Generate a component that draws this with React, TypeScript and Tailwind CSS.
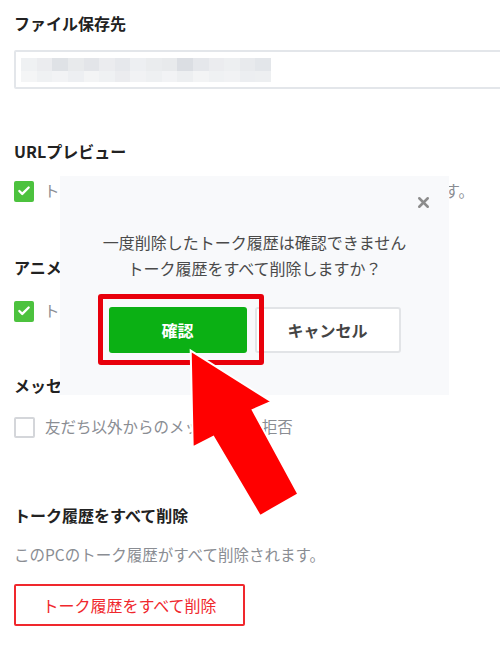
import { Check, X } from "lucide-react";

const mosaicTop = ["#eef0f2", "#e9ebee", "#dcdfe4", "#e6e8eb", "#e1e3e7", "#e9ebee", "#e4e6ea", "#eceef1", "#e8eaed", "#e6e8eb", "#d8dbe0", "#e3e5e9", "#e9ebee", "#eceef0", "#e6e8ec", "#e1e4e8"];
const mosaicBottom = ["#f3f4f6", "#eef0f2", "#f1f2f4", "#eceef1", "#f2f3f5", "#eef0f2", "#e9ebee", "#f0f1f3", "#edeff1", "#f1f2f4", "#eceef0", "#f2f3f5", "#eef0f2", "#f0f1f3", "#ebedf0", "#eceef0"];

const CheckRow = ({ checked, text, className }: { checked: boolean; text: string; className: string }) => (
  <div className={`flex items-center h-[24px] gap-[10px] ${className}`}>
    {checked ? (
      <span className="w-[20px] h-[21px] rounded-[2px] bg-[#4cc23e] flex items-center justify-center shrink-0">
        <Check className="w-[14px] h-[14px] text-white" strokeWidth={4} />
      </span>
    ) : (
      <span className="w-[21px] h-[21px] rounded-[2px] border-2 border-[#d4d6da] bg-white shrink-0" />
    )}
    <span className="text-[15.5px] text-[#8a8d93] whitespace-nowrap">{text}</span>
  </div>
);

const SettingsPanel = () => (
  <div className="flex flex-col pl-[14px]">
    <h2 className="mt-[11px] h-[24px] leading-[24px] text-[16px] font-bold text-[#222]">ファイル保存先</h2>
    <div className="mt-[15px] h-[39px] w-[500px] border-2 border-[#e3e6ea] rounded-[2px] flex items-center pl-[5px]">
      <div className="flex flex-col w-[250px] h-[24px] opacity-90">
        <div className="flex h-[13px]">
          {mosaicTop.map((c, i) => (
            <span key={i} className="flex-1" style={{ background: c }} />
          ))}
        </div>
        <div className="flex h-[11px]">
          {mosaicBottom.map((c, i) => (
            <span key={i} className="flex-1" style={{ background: c }} />
          ))}
        </div>
      </div>
    </div>

    <h2 className="mt-[50px] h-[24px] leading-[24px] text-[16px] font-bold text-[#222]">URLプレビュー</h2>
    <CheckRow checked className="mt-[16px]" text="トークルームに送信された、URLのプレビューを表示します。" />

    <h2 className="mt-[52px] h-[24px] leading-[24px] text-[16px] font-bold text-[#222]">アニメーション</h2>
    <CheckRow checked className="mt-[20px]" text="トークルームでアニメーションを再生します。" />

    <h2 className="mt-[50px] h-[24px] leading-[24px] text-[16px] font-bold text-[#222]">メッセージ受信拒否</h2>
    <CheckRow checked={false} className="mt-[18px]" text="友だち以外からのメッセージを拒否" />

    <h2 className="mt-[64px] h-[24px] leading-[24px] text-[16px] font-bold text-[#222]">トーク履歴をすべて削除</h2>
    <p className="mt-[15px] h-[24px] leading-[24px] text-[15.5px] text-[#8a8d93]">このPCのトーク履歴がすべて削除されます。</p>
    <button
      type="button"
      className="mt-[18px] w-[231px] h-[42px] border-2 border-[#f0282d] rounded-[2px] text-[16px] text-[#f0282d] bg-white"
    >
      トーク履歴をすべて削除
    </button>
  </div>
);

const ConfirmDialog = () => (
  <div className="absolute left-[60px] top-[176px] w-[389px] h-[219px] bg-[#f8f9fb]">
    <button type="button" className="absolute left-[355px] top-[18px] text-[#8c8c8c]">
      <X className="w-[17px] h-[17px]" strokeWidth={3.5} />
    </button>
    <div className="pt-[53px] text-center text-[16px] leading-[26px] text-[#4a4a4a]">
      <p>一度削除したトーク履歴は確認できません</p>
      <p>トーク履歴をすべて削除しますか？</p>
    </div>
    <div className="mt-[26px] flex justify-center gap-[8px]">
      <button type="button" className="w-[138px] h-[46px] rounded-[3px] bg-[#0bb014] text-white font-bold text-[16px]">
        確認
      </button>
      <button
        type="button"
        className="w-[146px] h-[46px] rounded-[3px] border-2 border-[#e2e4e7] bg-white text-[#444] font-bold text-[16px]"
      >
        キャンセル
      </button>
    </div>
    <div className="absolute left-[38px] top-[118px] w-[166px] h-[71px] border-[5px] border-[#e8000b] rounded-[3px]" />
  </div>
);

export default function App() {
  return (
    <div className="relative w-[500px] h-[654px] overflow-hidden bg-white font-['Noto_Sans_CJK_JP',sans-serif]">
      <SettingsPanel />
      <ConfirmDialog />
      <svg className="absolute left-0 top-0 pointer-events-none" width="500" height="654" viewBox="0 0 500 654">
        <polygon
          points="190.7,350.7 271.7,401.7 252.7,410 298.3,494 260,516 213.3,436.7 192.7,447.3"
          fill="#ff0000"
          stroke="#ffffff"
          strokeWidth="2"
          strokeLinejoin="miter"
        />
      </svg>
    </div>
  );
}
